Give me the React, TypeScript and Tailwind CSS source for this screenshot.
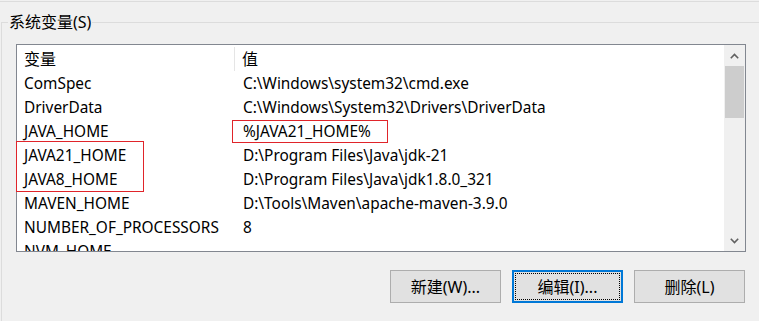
import React from "react";

const rows: [string, string][] = [
  ["ComSpec", "C:\\Windows\\system32\\cmd.exe"],
  ["DriverData", "C:\\Windows\\System32\\Drivers\\DriverData"],
  ["JAVA_HOME", "%JAVA21_HOME%"],
  ["JAVA21_HOME", "D:\\Program Files\\Java\\jdk-21"],
  ["JAVA8_HOME", "D:\\Program Files\\Java\\jdk1.8.0_321"],
  ["MAVEN_HOME", "D:\\Tools\\Maven\\apache-maven-3.9.0"],
  ["NUMBER_OF_PROCESSORS", "8"],
  ["NVM_HOME", ""],
];

const font = {
  fontFamily: '"Noto Sans", "Noto Sans CJK SC", sans-serif',
};

export default function App() {
  return (
    <div
      className="w-[759px] h-[321px] bg-[#f0f0f0] overflow-hidden text-[15.4px] text-black"
      style={font}
    >
      <div className="h-[2px] border-b border-[#dcdcdc]" />
      <div className="relative ml-[1px] mt-[20px] h-[400px] border-l border-t border-[#dcdcdc] pl-[14px] pt-[21px]">
        <div className="absolute left-[6px] top-[-13px] bg-[#f0f0f0] px-[1px] leading-[24px] text-[16px]">
          系统变量(S)
        </div>
        <div className="relative flex w-[730px] h-[208px] border border-[#828790] bg-white">
          <div className="flex-1 overflow-hidden">
            <div className="flex h-[27px] items-center">
              <div className="w-[218px] h-[24px] pl-[7px] flex items-center border-r border-[#e5e5e5] text-[16px]">
                变量
              </div>
              <div className="pl-[7px] leading-[24px] text-[16px]">值</div>
            </div>
            {rows.map(([k, v]) => (
              <div key={k} className="flex h-[24px] items-center whitespace-nowrap">
                <div className="w-[219px] pl-[7px]">{k}</div>
                <div className="pl-[7px]">{v}</div>
              </div>
            ))}
          </div>
          <div className="w-[21px] flex flex-col bg-[#f0f0f0]">
            <div className="h-[21px] flex items-center justify-center">
              <svg width="9" height="6" viewBox="0 0 9 6">
                <path d="M0.8 5.2 L4.5 1.5 L8.2 5.2" stroke="#606060" strokeWidth="1.6" fill="none" />
              </svg>
            </div>
            <div className="mx-[1px] h-[52px] bg-[#cdcdcd]" />
            <div className="flex-1" />
            <div className="h-[21px] flex items-center justify-center">
              <svg width="9" height="6" viewBox="0 0 9 6">
                <path d="M0.8 0.8 L4.5 4.5 L8.2 0.8" stroke="#606060" strokeWidth="1.6" fill="none" />
              </svg>
            </div>
          </div>
          <div className="absolute left-[-1px] top-[96px] w-[128px] h-[51px] border border-[#e0242a]" />
          <div className="absolute left-[215px] top-[75px] w-[156px] h-[23px] border border-[#e0242a]" />
        </div>
        <div className="flex mt-[18px] ml-[374px] gap-[11px]">
          <button className="w-[111px] h-[33px] bg-[#e1e1e1] border border-[#adadad] text-[16px]">
            新建(W)...
          </button>
          <button className="w-[111px] h-[33px] bg-[#e1e1e1] border-2 border-[#0078d7] p-[1px] text-[16px]">
            <div className="w-full h-full border border-dotted border-black flex items-center justify-center">
              编辑(I)...
            </div>
          </button>
          <button className="w-[111px] h-[33px] bg-[#e1e1e1] border border-[#adadad] text-[16px]">
            删除(L)
          </button>
        </div>
      </div>
    </div>
  );
}
